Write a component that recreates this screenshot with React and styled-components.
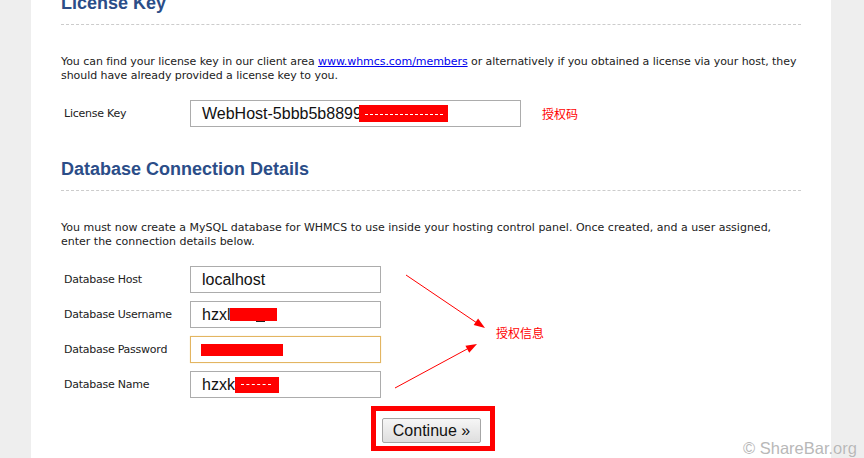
import React from "react";
import styled, { createGlobalStyle, css } from "styled-components";

const GlobalStyle = createGlobalStyle`
  html, body { margin: 0; padding: 0; background: #eeeeee; }
  body { font-family: "DejaVu Sans", Verdana, sans-serif; }
`;

const Page = styled.div`
  position: relative;
  display: flow-root;
  height: 458px;
  overflow: hidden;
`;

const Panel = styled.div`
  box-sizing: border-box;
  width: 800px;
  min-height: 480px;
  margin: -8px 0 0 31px;
  padding: 0 30px;
  background: #ffffff;
`;

const Section = styled.section`
  & + & { margin-top: 31px; }
`;

const Heading = styled.h2`
  margin: 0;
  padding-bottom: 10px;
  border-bottom: 1px dashed #cccccc;
  font: bold 18px/22px "Liberation Sans", Arial, sans-serif;
  color: #2b4d88;
`;

const Intro = styled.p`
  margin: 30px 0 0;
  font-size: 11px;
  line-height: 14px;
  letter-spacing: ${(p) => (p.$tight ? "-0.06px" : "0")};
  color: #222222;
`;

const Link = styled.a`
  color: #0000ee;
  text-decoration: underline;
`;

const FormGrid = styled.div`
  display: grid;
  grid-template-columns: 129px auto;
  row-gap: 8px;
  margin-top: 17px;
  align-items: center;
`;

const Label = styled.div`
  padding-left: 3px;
  font-size: 11px;
  letter-spacing: -0.25px;
  color: #222222;
`;

const FieldRow = styled.div`
  display: flex;
  align-items: center;
`;

const Field = styled.div`
  position: relative;
  box-sizing: border-box;
  display: flex;
  align-items: center;
  width: ${(p) => p.$width}px;
  height: 27px;
  padding-left: 11px;
  border: 1px solid ${(p) => (p.$focused ? "#e3b561" : "#acacac")};
  ${(p) =>
    p.$focused &&
    css`
      box-shadow: 0 0 1px #f0d9a8;
    `}
  background: #ffffff;
  font: 16px "Liberation Sans", Arial, sans-serif;
  color: #111111;
  white-space: nowrap;
`;

const Mask = styled.span`
  position: relative;
  display: inline-block;
  width: ${(p) => p.$w}px;
  height: ${(p) => p.$h}px;
  margin-left: ${(p) => p.$shift || 0}px;
  background: #ff0000;
  ${(p) =>
    p.$dash &&
    css`
      &::after {
        content: "";
        position: absolute;
        left: ${p.$dash.left}px;
        right: ${p.$dash.right}px;
        top: ${p.$dash.top}px;
        border-top: 1px dashed #ffffff;
      }
    `}
  ${(p) =>
    p.$underscore &&
    css`
      &::after {
        content: "";
        position: absolute;
        left: 26px;
        top: 100%;
        width: 9px;
        height: 1px;
        background: #222222;
      }
    `}
`;

const Note = styled.span`
  margin-left: 21px;
  font: 12px "Noto Sans CJK SC", sans-serif;
  color: #ff0000;
`;

const Actions = styled.div`
  display: flex;
  justify-content: center;
  margin-top: 8px;
  padding-left: 4px;
`;

const Highlight = styled.div`
  display: inline-block;
  border: 5px solid #ff0000;
  padding: 7px 9px 3px 6px;
  background: #ffffff;
`;

const Button = styled.button`
  box-sizing: border-box;
  width: 99px;
  height: 25px;
  padding: 0;
  border: 1px solid #a6a6a6;
  border-radius: 2px;
  background: linear-gradient(#f6f6f6, #dedede);
  font: 16px "Liberation Sans", Arial, sans-serif;
  color: #111111;
  cursor: pointer;
`;

const Overlay = styled.svg`
  position: absolute;
  left: 0;
  top: 0;
  pointer-events: none;
`;

const AnnotationText = styled.span`
  position: absolute;
  left: 496px;
  top: 324px;
  font: 12px/18px "Noto Sans CJK SC", sans-serif;
  color: #ff0000;
`;

const Watermark = styled.div`
  position: absolute;
  left: 743px;
  top: 438px;
  font: 16.5px/20px "Liberation Sans", Arial, sans-serif;
  color: #b8b8b8;
  text-shadow: 0 0 1px #ffffff;
  white-space: nowrap;
`;

const dbRows = [
  { label: "Database Host", content: "localhost" },
  { label: "Database Username", content: "hzxl", mask: { w: 47, h: 13, underscore: true } },
  { label: "Database Password", content: "", focused: true, mask: { w: 82, h: 12, shift: -1 } },
  { label: "Database Name", content: "hzxk", mask: { w: 44, h: 16, dash: { left: 6, right: 8, top: 7 } } },
];

export default function App() {
  return (
    <Page>
      <GlobalStyle />
      <Panel>
        <Section>
          <Heading>License Key</Heading>
          <Intro $tight>
            You can find your license key in our client area{" "}
            <Link href="#">www.whmcs.com/members</Link> or alternatively if you obtained a
            license via your host, they should have already provided a license key to you.
          </Intro>
          <FormGrid>
            <Label>License Key</Label>
            <FieldRow>
              <Field $width={331}>
                WebHost-5bbb5b8899
                <Mask $w={89} $h={17} $shift={-3} $dash={{ left: 6, right: 5, top: 9 }} />
              </Field>
              <Note>授权码</Note>
            </FieldRow>
          </FormGrid>
        </Section>
        <Section>
          <Heading>Database Connection Details</Heading>
          <Intro>
            You must now create a MySQL database for WHMCS to use inside your hosting control
            panel. Once created, and a user assigned, enter the connection details below.
          </Intro>
          <FormGrid>
            {dbRows.map((r) => (
              <React.Fragment key={r.label}>
                <Label>{r.label}</Label>
                <FieldRow>
                  <Field $width={191} $focused={r.focused}>
                    {r.content}
                    {r.mask && (
                      <Mask
                        $w={r.mask.w}
                        $h={r.mask.h}
                        $shift={r.mask.shift}
                        $dash={r.mask.dash}
                        $underscore={r.mask.underscore}
                      />
                    )}
                  </Field>
                </FieldRow>
              </React.Fragment>
            ))}
          </FormGrid>
          <Actions>
            <Highlight>
              <Button>Continue »</Button>
            </Highlight>
          </Actions>
        </Section>
      </Panel>
      <Overlay width="864" height="458" viewBox="0 0 864 458">
        <line x1="406" y1="275" x2="477" y2="323" stroke="#ff0000" strokeWidth="1" />
        <polygon points="485,328 473.7,325.1 478.1,318.5" fill="#ff0000" />
        <line x1="395" y1="388" x2="469" y2="348" stroke="#ff0000" strokeWidth="1" />
        <polygon points="477,344 469.2,352.7 465.4,345.7" fill="#ff0000" />
      </Overlay>
      <AnnotationText>授权信息</AnnotationText>
      <Watermark>© ShareBar.org</Watermark>
    </Page>
  );
}
